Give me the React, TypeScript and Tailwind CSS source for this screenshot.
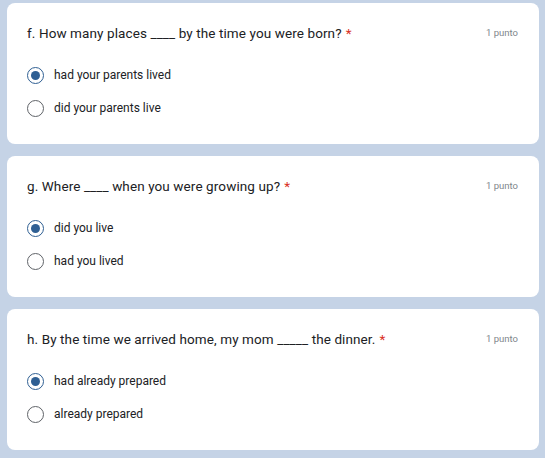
import React from "react";

type Q = { title: string; options: string[]; selected: number };

const questions: Q[] = [
  { title: "f. How many places ____ by the time you were born?", options: ["had your parents lived", "did your parents live"], selected: 0 },
  { title: "g. Where ____ when you were growing up?", options: ["did you live", "had you lived"], selected: 0 },
  { title: "h. By the time we arrived home, my mom _____ the dinner.", options: ["had already prepared", "already prepared"], selected: 0 },
];

function Radio({ checked }: { checked: boolean }) {
  return (
    <div
      className={
        "w-[17px] h-[17px] rounded-full border-[1.5px] flex items-center justify-center shrink-0 " +
        (checked ? "border-[#2f5f93]" : "border-[#5f6368]")
      }
    >
      {checked && <div className="w-[9px] h-[9px] rounded-full bg-[#2f5f93]" />}
    </div>
  );
}

function Card({ q }: { q: Q }) {
  return (
    <div className="bg-white rounded-[8px] h-[141px] pl-[20px] pr-[26px] pt-[20px]">
      <div className="flex items-start justify-between">
        <div className="text-[13.5px] leading-[20px] text-[#202124] tracking-[0.1px]" style={{ fontFamily: "Roboto, 'Open Sans', sans-serif" }}>
          {q.title}
          <span className="text-[#d93025] ml-[4px]">*</span>
        </div>
        <div className="text-[9.5px] leading-[20px] text-[#80868b] mr-[-5px]" style={{ fontFamily: "Roboto, sans-serif" }}>1 punto</div>
      </div>
      <div className="mt-[23px] flex flex-col gap-[15px]">
        {q.options.map((o, i) => (
          <div key={i} className="flex items-center h-[18px]">
            <Radio checked={i === q.selected} />
            <span className="ml-[10px] text-[12px] text-[#202124]" style={{ fontFamily: "Roboto, sans-serif" }}>{o}</span>
          </div>
        ))}
      </div>
    </div>
  );
}

export default function App() {
  return (
    <div className="w-[545px] h-[458px] bg-[#c5d3e6] pl-[7px] pr-[6px] pt-[3px] flex flex-col gap-[12px] overflow-hidden">
      {questions.map((q, i) => (
        <Card key={i} q={q} />
      ))}
    </div>
  );
}
